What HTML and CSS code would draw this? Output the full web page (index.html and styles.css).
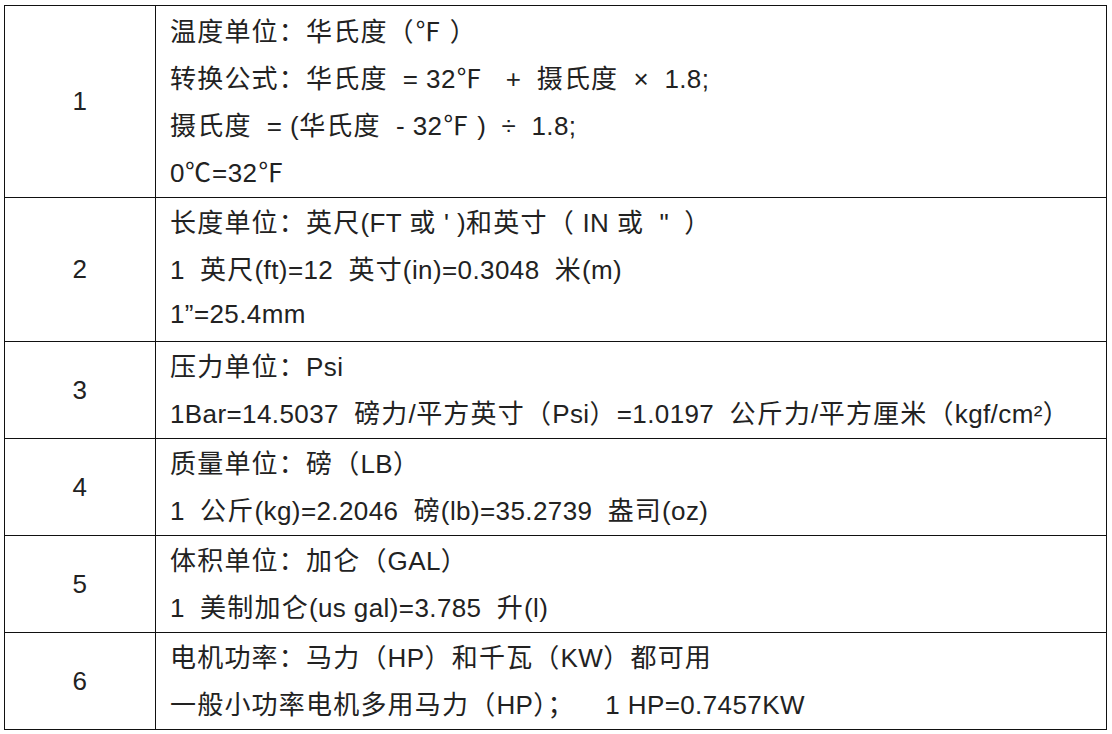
FILE: index.html
```html
<!DOCTYPE html>
<html lang="zh">
<head>
<meta charset="utf-8">
<link rel="stylesheet" href="styles.css">
</head>
<body>
<table class="units">
  <tr class="rows4">
    <td class="num">1</td>
    <td class="desc">
      <div class="line"><span class="z">温度单位：华氏度（℉</span> <span class="z">）</span></div>
      <div class="line"><span class="z">转换公式：华氏度</span>  = 32<span class="z">℉</span>   +  <span class="z">摄氏度</span>  ×  1.8;</div>
      <div class="line"><span class="z">摄氏度</span>  = (<span class="z">华氏度</span>  - 32<span class="z">℉</span> )  ÷  1.8;</div>
      <div class="line">0<span class="z">℃</span>=32<span class="z">℉</span></div>
    </td>
  </tr>
  <tr class="rows3">
    <td class="num">2</td>
    <td class="desc">
      <div class="line"><span class="z">长度单位：英尺</span>(FT <span class="z">或</span> ' )<span class="z">和英寸（</span> IN <span class="z">或</span>  "  <span class="z">）</span></div>
      <div class="line">1  <span class="z">英尺</span>(ft)=12  <span class="z">英寸</span>(in)=0.3048  <span class="z">米</span>(m)</div>
      <div class="line">1”=25.4mm</div>
    </td>
  </tr>
  <tr class="rows2">
    <td class="num">3</td>
    <td class="desc">
      <div class="line"><span class="z">压力单位：</span>Psi</div>
      <div class="line">1Bar=14.5037  <span class="z">磅力</span>/<span class="z">平方英寸（</span>Psi<span class="z">）</span>=1.0197  <span class="z">公斤力</span>/<span class="z">平方厘米（</span>kgf/cm²<span class="z">）</span></div>
    </td>
  </tr>
  <tr class="rows2">
    <td class="num">4</td>
    <td class="desc">
      <div class="line"><span class="z">质量单位：磅（</span>LB<span class="z">）</span></div>
      <div class="line">1  <span class="z">公斤</span>(kg)=2.2046  <span class="z">磅</span>(lb)=35.2739  <span class="z">盎司</span>(oz)</div>
    </td>
  </tr>
  <tr class="rows2">
    <td class="num">5</td>
    <td class="desc">
      <div class="line"><span class="z">体积单位：加仑（</span>GAL<span class="z">）</span></div>
      <div class="line">1  <span class="z">美制加仑</span>(us gal)=3.785  <span class="z">升</span>(l)</div>
    </td>
  </tr>
  <tr class="rows2">
    <td class="num">6</td>
    <td class="desc">
      <div class="line"><span class="z">电机功率：马力（</span>HP<span class="z">）和千瓦（</span>KW<span class="z">）都可用</span></div>
      <div class="line"><span class="z">一般小功率电机多用马力（</span>HP<span class="z">）；</span>    1 HP=0.7457KW</div>
    </td>
  </tr>
</table>
</body>
</html>
```
FILE: styles.css
```css
html, body {
  margin: 0;
  padding: 0;
  background: #fff;
}
body {
  padding: 5px 0 0 4px;
  font-family: "Liberation Sans", "Noto Sans CJK SC", sans-serif;
  font-size: 26px;
  letter-spacing: 0.4px;
  color: #222;
}
.units {
  border-collapse: collapse;
  width: 1103px;
  table-layout: fixed;
}
.units td {
  border: 1.5px solid #111;
  padding: 0;
  overflow: hidden;
}
.rows4 { height: 192px; }
.rows3 { height: 144px; }
.rows2 { height: 97px; }
.num {
  width: 150px;
  text-align: center;
  vertical-align: middle;
}
.desc {
  padding-left: 14px !important;
  vertical-align: middle;
}
.line {
  height: 47px;
  line-height: 43px;
  white-space: pre;
}
.z {
  font-family: "Noto Sans CJK SC", sans-serif;
  letter-spacing: 1.2px;
}
```
